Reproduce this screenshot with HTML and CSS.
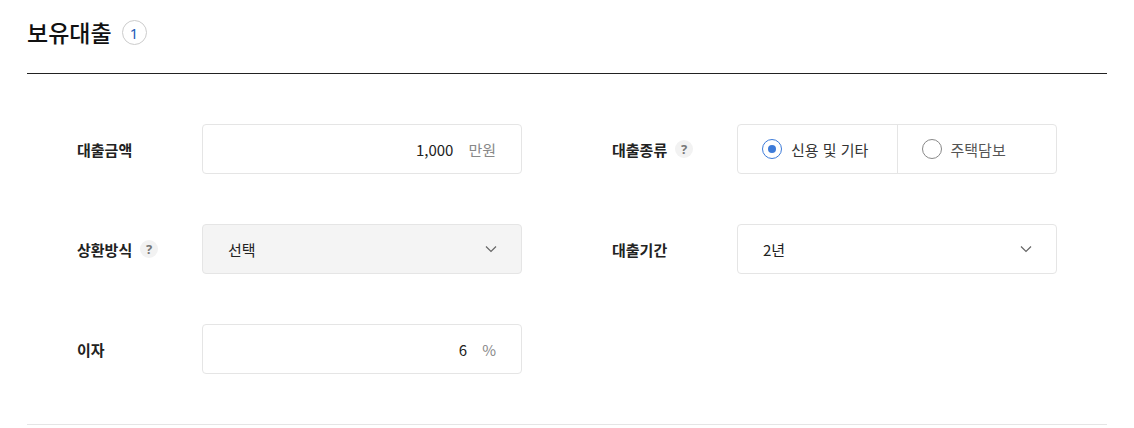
FILE: index.html
```html
<!DOCTYPE html>
<html lang="ko">
<head>
<meta charset="utf-8">
<link rel="stylesheet" href="styles.css">
</head>
<body>
<div class="wrap">
  <div class="head">
    <h2 class="title">보유대출</h2>
    <span class="count">1</span>
  </div>
  <div class="form">
    <div class="item">
      <div class="label">대출금액</div>
      <div class="field input"><span class="val">1,000</span><span class="unit">만원</span></div>
    </div>
    <div class="item">
      <div class="label">대출종류<span class="help">?</span></div>
      <div class="field radios">
        <div class="opt on"><span class="radio"></span><span>신용 및 기타</span></div>
        <div class="opt"><span class="radio"></span><span>주택담보</span></div>
      </div>
    </div>
    <div class="item">
      <div class="label">상환방식<span class="help">?</span></div>
      <div class="field select gray"><span>선택</span>
        <svg class="chev" width="12" height="8" viewBox="0 0 12 8"><path d="M1 1.5l5 5 5-5" fill="none" stroke="#666" stroke-width="1.2"/></svg>
      </div>
    </div>
    <div class="item">
      <div class="label">대출기간</div>
      <div class="field select"><span>2년</span>
        <svg class="chev" width="12" height="8" viewBox="0 0 12 8"><path d="M1 1.5l5 5 5-5" fill="none" stroke="#666" stroke-width="1.2"/></svg>
      </div>
    </div>
    <div class="item">
      <div class="label">이자</div>
      <div class="field input"><span class="val">6</span><span class="unit">%</span></div>
    </div>
  </div>
</div>
</body>
</html>
```

FILE: styles.css
```css
* { box-sizing: border-box; }
body {
  margin: 0;
  background: #fff;
  color: #222;
  font-family: "Noto Sans CJK KR", "Noto Sans", sans-serif;
}
.wrap { padding: 0 27px; }
.head {
  height: 74px;
  border-bottom: 1px solid #222;
  display: flex;
  align-items: center;
  padding-bottom: 10px;
  gap: 10px;
}
.title {
  margin: 0;
  font-size: 23px;
  font-weight: 500;
  letter-spacing: 0;
  color: #111;
}
.count {
  width: 25px;
  height: 25px;
  border: 1px solid #ccc;
  border-radius: 50%;
  display: flex;
  align-items: center;
  justify-content: center;
  font-family: "Noto Sans", sans-serif;
  font-size: 15px;
  color: #1c5bb8;
  margin-top: 2px;
}
.form {
  display: grid;
  grid-template-columns: 445px 445px;
  column-gap: 90px;
  row-gap: 50px;
  padding: 50px 50px;
  border-bottom: 1px solid #e5e5e5;
}
.item { display: flex; align-items: center; height: 50px; }
.label {
  width: 125px;
  font-size: 15px;
  font-weight: 700;
  display: flex;
  align-items: center;
  gap: 8px;
}
.help {
  width: 18px;
  height: 18px;
  border-radius: 50%;
  background: #f2f2f2;
  color: #777;
  font-family: "Noto Sans", sans-serif;
  font-size: 13px;
  font-weight: 700;
  display: flex;
  align-items: center;
  justify-content: center;
}
.field {
  width: 320px;
  height: 50px;
  border: 1px solid #e5e5e5;
  border-radius: 4px;
  display: flex;
  align-items: center;
  font-size: 15px;
}
.input { justify-content: flex-end; padding-right: 25px; gap: 15px; }
.unit { color: #888; }
.select { justify-content: space-between; padding: 0 24px 0 25px; }
.gray { background: #f4f4f4; }
.radios { padding: 0; }
.opt {
  flex: 1;
  height: 100%;
  display: flex;
  align-items: center;
  gap: 9px;
  padding-left: 24px;
  color: #555;
}
.opt + .opt { border-left: 1px solid #e5e5e5; }
.opt.on { color: #333; }
.radio {
  width: 20px;
  height: 20px;
  border-radius: 50%;
  border: 1.5px solid #888;
  display: flex;
  align-items: center;
  justify-content: center;
}
.opt.on .radio { border-color: #3d7bd9; }
.opt.on .radio::after {
  content: "";
  width: 8px;
  height: 8px;
  border-radius: 50%;
  background: #3d7bd9;
}
```
